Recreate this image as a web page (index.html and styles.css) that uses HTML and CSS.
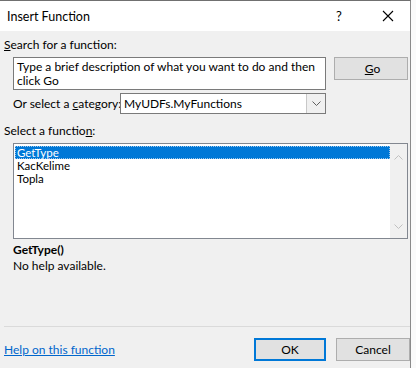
FILE: index.html
```html
<!DOCTYPE html>
<html lang="en">
<head>
  <meta charset="UTF-8" />
  <title>Insert Function</title>
  <link rel="stylesheet" href="styles.css">
</head>
<body>
  <div class="dialog">
    <div class="titlebar">
      <span class="title">Insert Function</span>
      <span class="tb-help">?</span>
      <span class="tb-close">
        <svg width="12" height="12" viewBox="0 0 12 12"><path d="M1 1L11 11M11 1L1 11" stroke="#000" stroke-width="1.1" fill="none"/></svg>
      </span>
    </div>

    <div class="content">
      <div class="label"><u>S</u>earch for a function:</div>
      <div class="search-row">
        <div class="search-box">Type a brief description of what you want to do and then click Go</div>
        <button class="btn">&nbsp;<u>G</u>o</button>
      </div>
      <div class="category-row">
        <span class="category-label">Or select a <u>c</u>ategory:</span>
        <div class="combo">
          <span class="combo-value">MyUDFs.MyFunctions</span>
          <span class="combo-arrow">
            <svg width="9" height="6" viewBox="0 0 9 6"><path d="M0.5 0.5L4.5 4.5L8.5 0.5" stroke="#606060" fill="none"/></svg>
          </span>
        </div>
      </div>

      <div class="label list-label">Select a functio<u>n</u>:</div>
      <div class="listbox">
        <ul class="items">
          <li class="selected">GetType</li>
          <li>KacKelime</li>
          <li>Topla</li>
        </ul>
        <div class="scrollbar">
          <svg width="9" height="6" viewBox="0 0 9 6"><path d="M0.5 5.5L4.5 1.5L8.5 5.5" stroke="#c0c0c0" fill="none"/></svg>
          <svg width="9" height="6" viewBox="0 0 9 6"><path d="M0.5 0.5L4.5 4.5L8.5 0.5" stroke="#c0c0c0" fill="none"/></svg>
        </div>
      </div>

      <div class="func-name">GetType()</div>
      <div class="func-desc">No help available.</div>
    </div>

    <div class="separator"></div>

    <div class="footer">
      <a class="help-link" href="#">Help on this function</a>
      <button class="btn btn-ok">OK</button>
      <button class="btn">Cancel</button>
    </div>
  </div>
</body>
</html>
```

FILE: styles.css
```css
body {
  margin: 0;
  background-color: #fafafa;
  font-family: Lato, "Noto Sans", sans-serif;
  font-size: 12px;
  color: #000;
}
.dialog {
  width: 410px;
  height: 367px;
  background-color: #f0f0f0;
  border-top: 1px solid #707070;
  border-right: 1px solid #8a8a8a;
}
.titlebar {
  height: 30px;
  background-color: #fff;
  display: flex;
  align-items: center;
  padding-left: 7px;
  font-size: 12.5px;
}
.title {
  flex: 1;
}
.tb-help {
  width: 16px;
  font-size: 13px;
  margin-right: 30px;
}
.tb-close {
  width: 28px;
  display: flex;
  align-items: center;
}
.content {
  padding: 0 0 0 4px;
}
.label {
  line-height: 14px;
  margin-top: 7px;
}
.search-row {
  display: flex;
  margin-top: 5px;
  margin-left: 9px;
}
.search-box {
  box-sizing: border-box;
  width: 313px;
  height: 33px;
  background-color: #fff;
  border: 1px solid #7a7a7a;
  padding: 2px 3px;
  line-height: 14px;
}
.btn {
  box-sizing: border-box;
  width: 74px;
  height: 23px;
  background-color: #e1e1e1;
  border: 1px solid #adadad;
  font-family: inherit;
  font-size: 12px;
  padding: 0;
  color: #000;
}
.search-row .btn {
  margin-left: 8px;
}
.category-row {
  display: flex;
  align-items: center;
  margin-top: 3px;
  margin-left: 9px;
}
.category-label {
  flex-shrink: 0;
  width: 107px;
  white-space: nowrap;
}
.combo {
  box-sizing: border-box;
  display: flex;
  width: 206px;
  height: 21px;
  background-color: #fff;
  border: 1px solid #7a7a7a;
}
.combo-value {
  flex: 1;
  padding-left: 3px;
  line-height: 19px;
}
.combo-arrow {
  width: 18px;
  background-color: #f0f0f0;
  border-left: 1px solid #c8c8c8;
  display: flex;
  align-items: center;
  justify-content: center;
}
.list-label {
  margin-top: 10px;
}
.listbox {
  box-sizing: border-box;
  display: flex;
  width: 395px;
  height: 96px;
  margin-top: 5px;
  margin-left: 9px;
  background-color: #fff;
  border: 1px solid #828790;
}
.items {
  flex: 1;
  list-style: none;
  margin: 0;
  padding: 2px 0 0 1px;
  font-size: 11.5px;
}
.items li {
  line-height: 13px;
  padding-left: 2px;
}
.items .selected {
  background-color: #0078d7;
  color: #fff;
  outline: 1px dotted #9cc8ec;
  outline-offset: -1px;
}
.scrollbar {
  width: 17px;
  background-color: #f0f0f0;
  display: flex;
  flex-direction: column;
  justify-content: space-between;
  align-items: center;
  padding: 10px 0 8px;
}
.func-name {
  font-weight: bold;
  line-height: 14px;
  margin-top: 4px;
  margin-left: 9px;
}
.func-desc {
  line-height: 14px;
  margin-top: 2px;
  margin-left: 9px;
}
.separator {
  height: 1px;
  background-color: #dadada;
  margin: 53px 0 0 4px;
}
.footer {
  display: flex;
  align-items: center;
  margin-top: 11px;
  padding-left: 4px;
}
.help-link {
  flex: 1;
  color: #0066cc;
  text-decoration: underline;
}
.btn-ok {
  width: 72px;
  border: 2px solid #0078d7;
  margin-right: 10px;
}
```
